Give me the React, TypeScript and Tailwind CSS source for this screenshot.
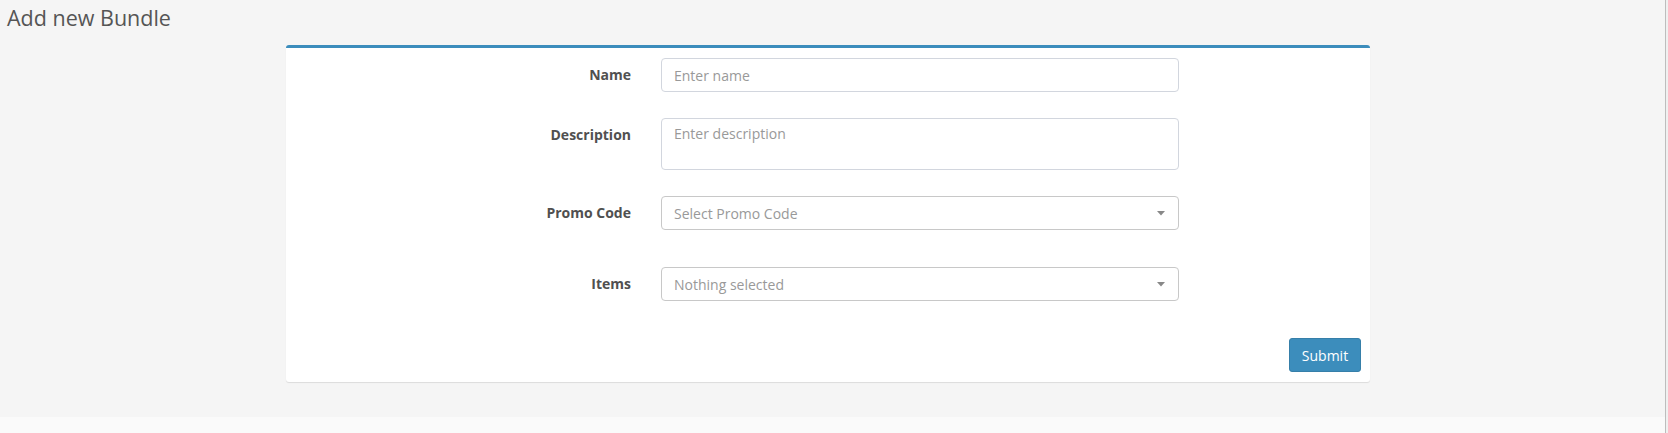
import React from "react";

function Caret() {
  return (
    <svg width="8" height="5" viewBox="0 0 8 5" className="shrink-0">
      <path d="M0 0 L8 0 L4 4.5 Z" fill="#888" />
    </svg>
  );
}

function Row({ label, children, labelPt = "pt-[7px]" }: { label: string; children: React.ReactNode; labelPt?: string }) {
  return (
    <div className="flex items-start">
      <div className={`w-[345px] text-right text-[14px] leading-[20px] font-bold text-[#505050] ${labelPt}`}>{label}</div>
      <div className="ml-[30px] w-[518px]">{children}</div>
    </div>
  );
}

export default function App() {
  return (
    <div className="w-[1668px] h-[433px] bg-[#f0f0f0] flex" style={{ fontFamily: '"Open Sans", "Liberation Sans", sans-serif' }}>
      <div className="w-[1666px] border-r border-[#bdbdbd] flex flex-col">
        <div className="h-[417px] bg-[#f5f5f5]">
          <div className="h-[45px] pl-[7px] pt-[4px] text-[21.5px] leading-[28px] text-[#555]">Add new Bundle</div>
          <div className="ml-[286px] w-[1084px] h-[337px] bg-white border-t-[3px] border-[#3c8dbc] rounded-[3px] shadow-[0_1px_1px_rgba(0,0,0,0.1)] flex flex-col">
            <div className="pt-[10px] flex flex-col">
              <Row label="Name">
                <div className="h-[34px] border border-[#d2d6de] rounded-[4px] px-[12px] flex items-center text-[14px] text-[#999]">Enter name</div>
              </Row>
              <div className="h-[26px]" />
              <Row label="Description">
                <div className="h-[52px] border border-[#d2d6de] rounded-[4px] px-[12px] pt-[5px] text-[14px] leading-[20px] text-[#999]">Enter description</div>
              </Row>
              <div className="h-[26px]" />
              <Row label="Promo Code">
                <div className="h-[34px] border border-[#c8c8c8] rounded-[4px] pl-[12px] pr-[13px] flex items-center justify-between text-[14px] text-[#999]">
                  <span>Select Promo Code</span>
                  <Caret />
                </div>
              </Row>
              <div className="h-[37px]" />
              <Row label="Items">
                <div className="h-[34px] border border-[#c8c8c8] rounded-[4px] pl-[12px] pr-[13px] flex items-center justify-between text-[14px] text-[#999]">
                  <span>Nothing selected</span>
                  <Caret />
                </div>
              </Row>
              <div className="h-[37px]" />
              <div className="flex justify-end pr-[9px]">
                <button className="w-[72px] h-[34px] bg-[#3c8dbc] rounded-[3px] text-white text-[14px] border border-[#367fa9]">Submit</button>
              </div>
            </div>
          </div>
        </div>
        <div className="flex-1 bg-[#fafafa]" />
      </div>
    </div>
  );
}
